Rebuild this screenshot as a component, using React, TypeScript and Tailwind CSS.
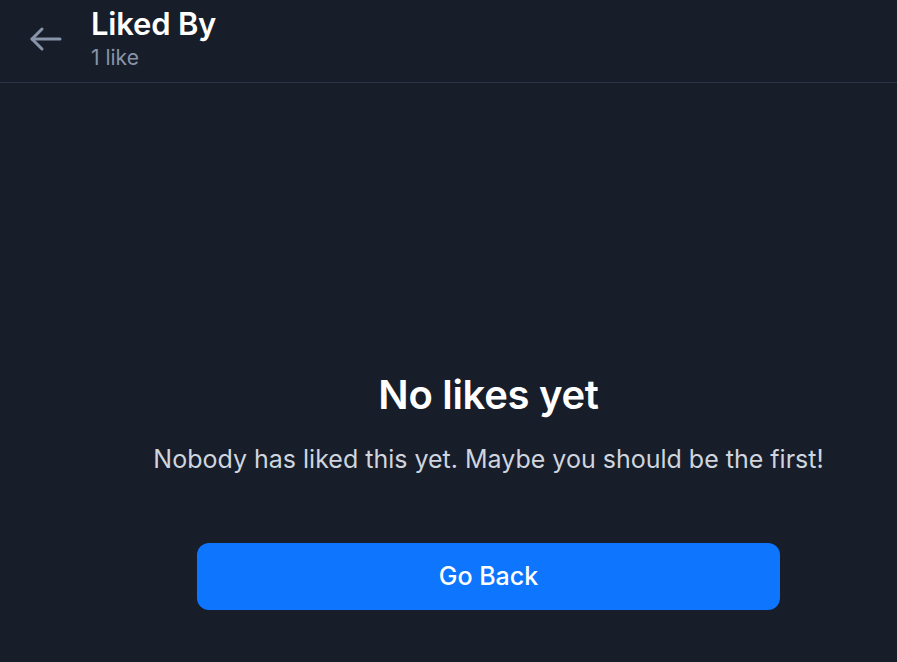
export default function App() {
  return (
    <div
      className="min-h-[662px] w-full bg-[#171d29] flex flex-col"
      style={{ fontFamily: "Inter, 'Noto Sans', sans-serif" }}
    >
      <header className="h-[83px] flex items-start border-b border-[#2a3345]">
        <button className="w-[91px] h-[78px] flex items-center justify-center text-[#8794aa]">
          <svg width="34" height="26" viewBox="0 0 34 26" fill="none" stroke="currentColor" strokeWidth="3" strokeLinecap="round" strokeLinejoin="round">
            <path d="M31 13H3" />
            <path d="M13 3L3 13l10 10" />
          </svg>
        </button>
        <div className="flex flex-col pt-[4px]">
          <h1 className="text-[31px] leading-[40px] font-semibold text-white tracking-[-0.2px]">Liked By</h1>
          <p className="text-[21px] leading-[26px] text-[#8794aa] mt-[1px]">1 like</p>
        </div>
      </header>
      <main className="flex-1 flex flex-col items-center pl-[80px] pt-[288px]">
        <h2 className="text-[40px] leading-[48px] font-semibold text-white tracking-[-0.3px]">No likes yet</h2>
        <p className="mt-[23px] text-[25px] leading-[34px] text-[#cfd5df]">
          Nobody has liked this yet. Maybe you should be the first!
        </p>
        <button className="mt-[67px] w-[583px] h-[67px] rounded-[12px] bg-[#0d75fe] text-white text-[25px] font-medium">
          Go Back
        </button>
      </main>
    </div>
  );
}
